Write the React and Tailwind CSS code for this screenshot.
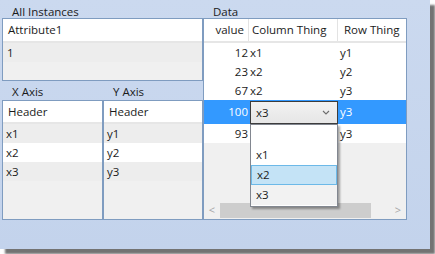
import React from "react";

const DATA_ROWS = [
  { value: 12, col: "x1", row: "y1" },
  { value: 23, col: "x2", row: "y2" },
  { value: 67, col: "x2", row: "y3" },
];

const OPTIONS = ["", "x1", "x2", "x3"];

function ListGrid({ rows, className = "" }) {
  return (
    <div className={"flex flex-col border border-[#7f9cc0] bg-[#f0f0f0] " + className}>
      <div className="h-[23px] shrink-0 flex items-center pl-[5px] bg-white border-b-2 border-[#e6e6e6]">
        Header
      </div>
      {rows.map((r, i) => (
        <div
          key={r}
          className={"h-[19px] shrink-0 flex items-center pl-[3px] " + (i % 2 ? "bg-white" : "bg-[#ededed]")}
        >
          {r}
        </div>
      ))}
    </div>
  );
}

function Chevron() {
  return (
    <svg width="8" height="5" viewBox="0 0 8 5" className="text-[#6d6d6d]">
      <path d="M1 1 L4 4 L7 1" fill="none" stroke="currentColor" strokeWidth="1.1" />
    </svg>
  );
}

export default function App() {
  return (
    <div className="w-[435px] h-[254px] bg-white text-[11.5px] text-[#1b1b1b] font-['Open_Sans',sans-serif]">
      <div className="w-[430px] h-[249px] bg-linear-to-b from-[#cbd9ef] to-[#c3d3ec] shadow-[5px_5px_2px_rgba(0,0,0,0.55)] pl-[2px] pt-[2px] flex">
        {/* Left side */}
        <div className="w-[201px] flex flex-col">
          <div className="h-[16px] pt-[4px] pl-[10px] leading-none">All Instances</div>
          <div className="h-[63px] flex flex-col border border-[#7f9cc0] bg-[#f0f0f0]">
            <div className="h-[24px] shrink-0 flex items-center pl-[5px] bg-white border-b-2 border-[#e6e6e6]">
              Attribute1
            </div>
            <div className="h-[19px] shrink-0 flex items-center pl-[4px] bg-[#ededed]">1</div>
          </div>
          <div className="h-[19px] pt-[5px] flex leading-none">
            <span className="w-[101px] pl-[10px]">X Axis</span>
            <span className="pl-[10px]">Y Axis</span>
          </div>
          <div className="h-[120px] flex">
            <ListGrid rows={["x1", "x2", "x3"]} className="w-[101px]" />
            <ListGrid rows={["y1", "y2", "y3"]} className="w-[100px]" />
          </div>
        </div>

        {/* Data */}
        <div className="w-[204px] flex flex-col">
          <div className="h-[16px] pt-[4px] pl-[10px] leading-none">Data</div>
          <div className="h-[202px] relative flex flex-col border border-[#7f9cc0] bg-[#f0f0f0] overflow-hidden">
            <div className="h-[24px] shrink-0 flex bg-white border-b-2 border-[#e6e6e6]">
              <div className="w-[45px] flex items-center justify-end pr-[4px] border-r border-[#e3e3e3]">value</div>
              <div className="w-[89px] flex items-center pl-[3px] border-r border-[#e3e3e3]">Column Thing</div>
              <div className="flex-1 flex items-center pl-[6px] whitespace-nowrap">Row Thing</div>
            </div>
            {DATA_ROWS.map((r) => (
              <div key={r.value} className="h-[19px] shrink-0 flex items-center bg-white">
                <div className="w-[45px] text-right pr-[1px]">{r.value}</div>
                <div className="w-[89px] pl-[1px]">{r.col}</div>
                <div className="flex-1 pl-[2px]">{r.row}</div>
              </div>
            ))}
            <div className="h-[24px] shrink-0 flex items-center bg-[#3399ff] text-white">
              <div className="w-[45px] text-right pr-[1px]">100</div>
              <div className="w-[89px] h-full pl-[1px] pt-[1px]">
                <div className="h-full flex items-center justify-between pl-[5px] pr-[7px] border border-[#3c3c3c] bg-linear-to-b from-[#f2f2f2] to-[#e6e6e6] text-[#1b1b1b]">
                  <span>x3</span>
                  <Chevron />
                </div>
              </div>
              <div className="flex-1 pl-[2px]">y3</div>
            </div>
            <div className="h-[19px] shrink-0 flex items-center bg-white">
              <div className="w-[45px] text-right pr-[1px]">93</div>
              <div className="w-[89px]" />
              <div className="flex-1 pl-[2px]">y3</div>
            </div>
            <div className="flex-1" />
            <div className="h-[17px] shrink-0 flex items-center bg-[#f0f0f0] text-[#a6a6a6]">
              <span className="w-[16px] text-center text-[11px]">&lt;</span>
              <div className="h-[15px] w-[151px] bg-[#cdcdcd]" />
              <div className="flex-1" />
              <span className="w-[16px] text-center text-[11px]">&gt;</span>
            </div>

            {/* open dropdown */}
            <div className="absolute left-[46px] top-[105px] w-[88px] h-[83px] flex flex-col bg-white border border-[#828790] shadow-[2px_2px_2px_rgba(0,0,0,0.35)]">
              {OPTIONS.map((o) => (
                <div
                  key={o || "empty"}
                  className={
                    "h-[20px] shrink-0 flex items-center pl-[5px] " +
                    (o === "x2"
                      ? "bg-[#c4e3f6] border border-[#6cb9e8]"
                      : o === "x3"
                      ? "bg-[#f2f2f2]"
                      : "bg-white")
                  }
                >
                  {o}
                </div>
              ))}
            </div>
          </div>
        </div>
      </div>
    </div>
  );
}
